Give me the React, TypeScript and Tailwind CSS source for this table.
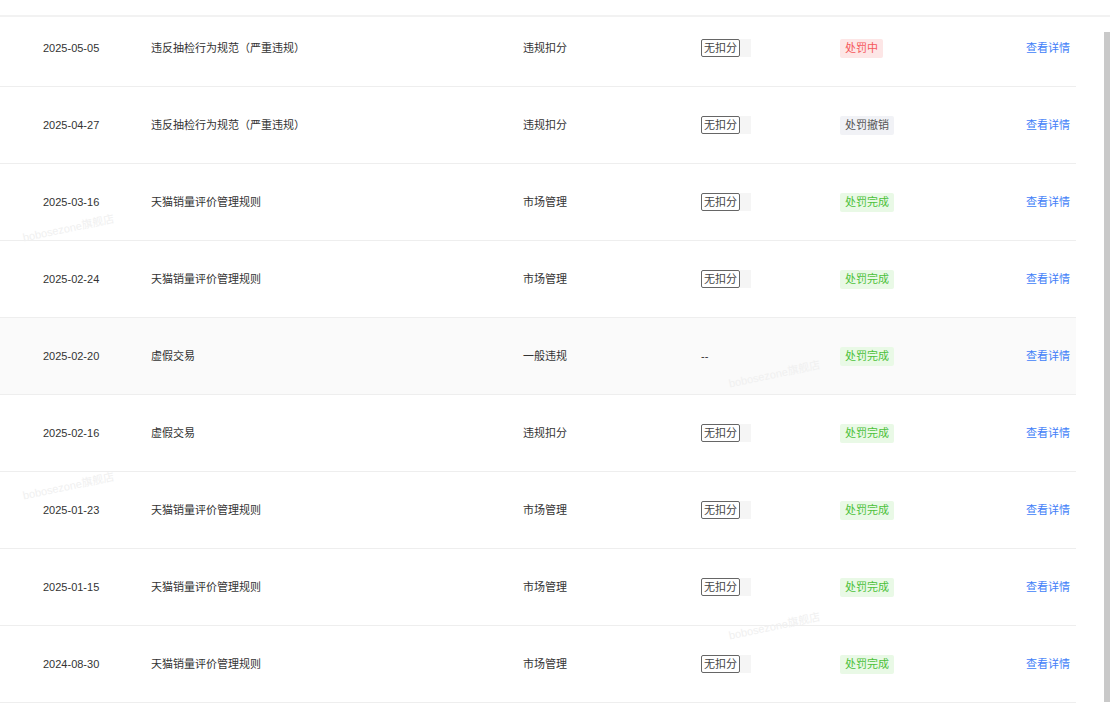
import React from "react";

type Status = "processing" | "revoked" | "done";

type Row = {
  date: string;
  rule: string;
  kind: string;
  score: boolean;
  status: Status;
  hover?: boolean;
};

const rows: Row[] = [
  { date: "2025-05-05", rule: "违反抽检行为规范（严重违规）", kind: "违规扣分", score: true, status: "processing" },
  { date: "2025-04-27", rule: "违反抽检行为规范（严重违规）", kind: "违规扣分", score: true, status: "revoked" },
  { date: "2025-03-16", rule: "天猫销量评价管理规则", kind: "市场管理", score: true, status: "done" },
  { date: "2025-02-24", rule: "天猫销量评价管理规则", kind: "市场管理", score: true, status: "done" },
  { date: "2025-02-20", rule: "虚假交易", kind: "一般违规", score: false, status: "done", hover: true },
  { date: "2025-02-16", rule: "虚假交易", kind: "违规扣分", score: true, status: "done" },
  { date: "2025-01-23", rule: "天猫销量评价管理规则", kind: "市场管理", score: true, status: "done" },
  { date: "2025-01-15", rule: "天猫销量评价管理规则", kind: "市场管理", score: true, status: "done" },
  { date: "2024-08-30", rule: "天猫销量评价管理规则", kind: "市场管理", score: true, status: "done" },
];

function StatusTag({ status }: { status: Status }) {
  if (status === "processing") {
    return (
      <span className="inline-block h-[19px] rounded-[2px] bg-[#fde6e6] px-[5px] leading-[19px] text-[#f5585a]">
        处罚中
      </span>
    );
  }
  if (status === "revoked") {
    return (
      <span className="inline-block h-[19px] rounded-[2px] bg-[#f1f2f6] px-[5px] leading-[19px] text-[#555]">
        处罚撤销
      </span>
    );
  }
  return (
    <span className="inline-block h-[19px] rounded-[2px] bg-[#e9f9e6] px-[5px] leading-[19px] text-[#4cc13a]">
      处罚完成
    </span>
  );
}

// faint shop watermark, drawn over the table
const marks = [
  { x: 22, y: 220 },
  { x: 22, y: 478 },
  { x: 728, y: 366 },
  { x: 728, y: 618 },
];

export default function App() {
  return (
    <div
      className="relative h-[722px] w-[1110px] overflow-hidden bg-white text-[11px] text-[#333]"
      style={{ fontFamily: '"Liberation Sans", "Noto Sans CJK SC", sans-serif' }}
    >
      <div className="h-[17px] border-b-2 border-[#f2f2f2]" />
      <div className="flex">
        <div className="h-[705px] w-[1076px] overflow-hidden">
          <div className="-mt-[7px]">
            {rows.map((r) => (
              <div
                key={r.date}
                className={`grid h-[77px] grid-cols-[151px_372px_178px_139px_1fr] items-center border-b border-[#eeeeee] ${
                  r.hover ? "bg-[#fafafa]" : ""
                }`}
              >
                <div className="pl-[43px]">{r.date}</div>
                <div>{r.rule}</div>
                <div>{r.kind}</div>
                <div className="flex items-center">
                  {r.score ? (
                    <>
                      <span className="inline-block h-[18px] rounded-[2px] border border-[#666] px-[2px] leading-[16px] text-[#444]">
                        无扣分
                      </span>
                      <span className="h-[18px] w-[11px] bg-[#f5f5f5]" />
                    </>
                  ) : (
                    <span>--</span>
                  )}
                </div>
                <div className="flex items-center justify-between pr-[6px]">
                  <StatusTag status={r.status} />
                  <a className="cursor-pointer text-[#3f7ef8]">查看详情</a>
                </div>
              </div>
            ))}
          </div>
        </div>
        <div className="ml-[28px] mt-[15px] h-[670px] w-[6px] bg-[#c9c9c9]" />
      </div>
      {marks.map((m, i) => (
        <span
          key={i}
          className="pointer-events-none absolute -rotate-[12deg] text-[11px] text-[#f0f0f0]"
          style={{ left: m.x, top: m.y }}
        >
          bobosezone旗舰店
        </span>
      ))}
    </div>
  );
}
